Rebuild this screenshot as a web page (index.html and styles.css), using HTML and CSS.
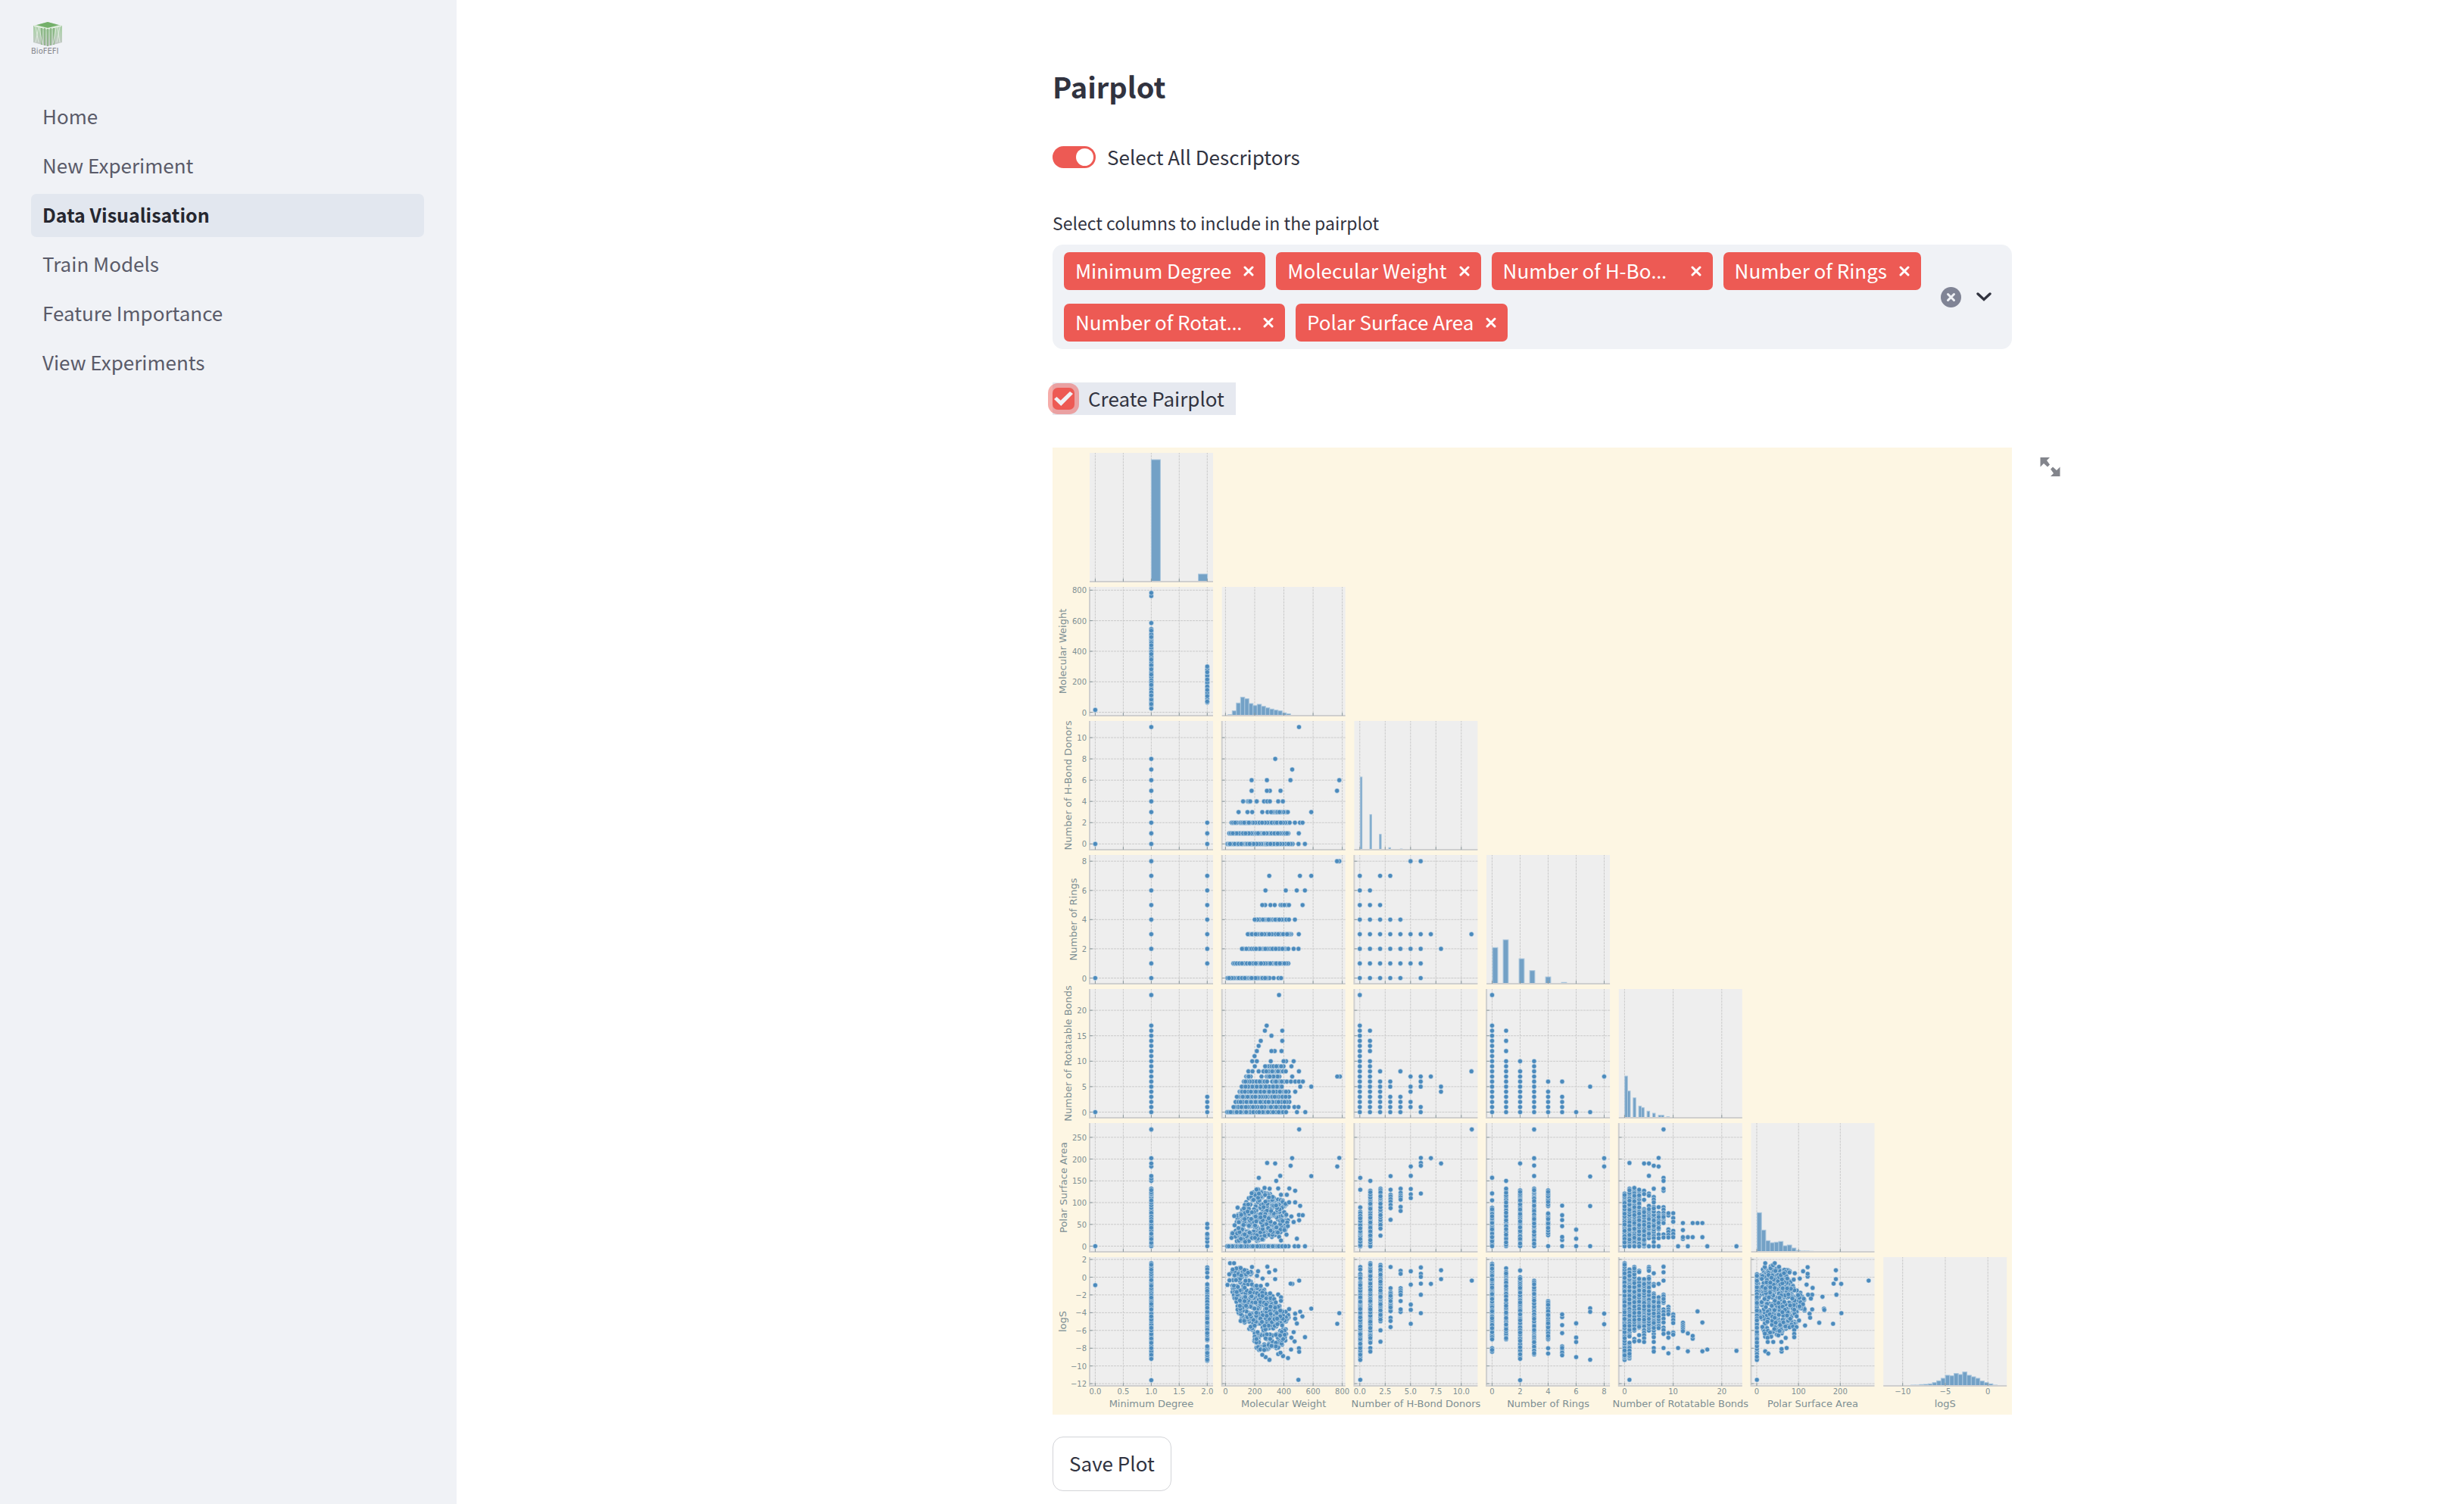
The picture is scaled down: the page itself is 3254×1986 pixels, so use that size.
FILE: index.html
```html
<!DOCTYPE html>
<html lang="en">
<head>
<meta charset="utf-8">
<title>Data Visualisation</title>
<link rel="stylesheet" href="styles.css">
</head>
<body>
<div class="app">
  <aside class="sidebar">
    <svg class="logo" viewBox="0 0 44 44" role="img" aria-label="BioFEFI">
      <defs>
        <linearGradient id="cube" x1="0" y1="0" x2="0" y2="1">
          <stop offset="0" stop-color="#5fa552"/>
          <stop offset=".45" stop-color="#82b67a"/>
          <stop offset="1" stop-color="#a5a3a6"/>
        </linearGradient>
      </defs>
      <path d="M3 6 22 1 41 6V28L22 33 3 28Z" fill="url(#cube)" opacity=".55"/>
      <path d="M8 5 22 1 36 5 22 9Z" fill="#5fa552" opacity=".7"/>
      <path d="M4 6 22 10 40 6" fill="none" stroke="#e3efe1" stroke-width="2"/>
      <path d="M22 10V33M18 9V32M26 9V32M14 9V31M30 9V31" stroke="#7fae78" stroke-width="2" opacity=".7"/>
      <path d="M6 8 10 28M10 8 6 28M11 9 15 30M35 8 38 28M38 8 34 28M33 9 29 30" fill="none" stroke="#e6efe6" stroke-width="1" opacity=".8"/>
      <text x="0" y="43" class="logo-text">BioFEFI</text>
    </svg>
    <nav class="nav">
      <a href="#home">Home</a>
      <a href="#new">New Experiment</a>
      <a href="#data" class="active" aria-current="page">Data Visualisation</a>
      <a href="#train">Train Models</a>
      <a href="#importance">Feature Importance</a>
      <a href="#view">View Experiments</a>
    </nav>
  </aside>
  <main class="main">
    <div class="content">
      <h1>Pairplot</h1>
      <label class="toggle"><input type="checkbox" role="switch" checked><span>Select All Descriptors</span></label>
      <div class="field">
        <p class="field-label" id="columns-label">Select columns to include in the pairplot</p>
        <div class="multiselect" role="group" aria-labelledby="columns-label">
          <ul class="chips">
            <li><span>Minimum Degree</span><button aria-label="Remove Minimum Degree"><svg viewBox="0 0 14 14"><path d="M2 2 12 12M12 2 2 12"/></svg></button></li>
            <li><span>Molecular Weight</span><button aria-label="Remove Molecular Weight"><svg viewBox="0 0 14 14"><path d="M2 2 12 12M12 2 2 12"/></svg></button></li>
            <li class="cut"><span>Number of H-Bo<i>…</i></span><button aria-label="Remove Number of H-Bond Donors"><svg viewBox="0 0 14 14"><path d="M2 2 12 12M12 2 2 12"/></svg></button></li>
            <li><span>Number of Rings</span><button aria-label="Remove Number of Rings"><svg viewBox="0 0 14 14"><path d="M2 2 12 12M12 2 2 12"/></svg></button></li>
            <li class="cut"><span>Number of Rotat<i>…</i></span><button aria-label="Remove Number of Rotatable Bonds"><svg viewBox="0 0 14 14"><path d="M2 2 12 12M12 2 2 12"/></svg></button></li>
            <li><span>Polar Surface Area</span><button aria-label="Remove Polar Surface Area"><svg viewBox="0 0 14 14"><path d="M2 2 12 12M12 2 2 12"/></svg></button></li>
          </ul>
          <button class="clear" aria-label="Clear all"><svg viewBox="0 0 27 27"><circle cx="13.5" cy="13.5" r="13.5" fill="#808495"/><path d="M9.5 9.5 17.5 17.5M17.5 9.5 9.5 17.5" stroke="#f0f2f6" stroke-width="3" stroke-linecap="round"/></svg></button>
          <button class="open" aria-label="Open"><svg viewBox="0 0 20 12"><path d="M2 2 10 9.500 18 2" fill="none" stroke="#31333f" stroke-width="3.400" stroke-linecap="round"/></svg></button>
        </div>
      </div>
      <label class="check"><input type="checkbox" checked><span>Create Pairplot</span></label>
      <div class="figure-row">
        <svg id="plot" class="plot" viewBox="0 0 1267 1277" role="img" aria-label="Pairplot of descriptors"></svg>
        <button class="expand" aria-label="View fullscreen"><svg viewBox="0 0 26 25"><path d="M0 0H12.500L8.500 4 12.500 9.500 9.500 12.500 4.500 8 0 12.500ZM26 25H13.500L17.500 21 13.500 15.500 16.500 12.500 21.500 17 26 12.500Z" fill="#83858c"/></svg></button>
      </div>
      <button class="save">Save Plot</button>
    </div>
  </main>
</div>
<script src="plot.js"></script>
</body>
</html>
```
FILE: styles.css
```css
* { box-sizing: border-box; }
body {
  margin: 0;
  background: #fff;
  color: #31333f;
  font-family: "Noto Sans CJK SC", "Noto Sans", sans-serif;
  font-size: 26px;
  line-height: 40px;
}
button { border: 0; padding: 0; background: none; font: inherit; color: inherit; }
svg { display: block; }
.app { display: flex; min-height: 100vh; }
.sidebar { flex: none; width: 603px; padding: 28px 43px 40px 41px; background: #f0f2f6; }
.logo { width: 44px; height: 44px; overflow: visible; }
.logo-text { font: 10px "DejaVu Sans", sans-serif; fill: #85868c; }
.nav { display: flex; flex-direction: column; gap: 8px; margin-top: 54px; }
.nav a { padding: 7px 15px 10px; border-radius: 7px; color: #5a5b69; text-decoration: none; }
.nav .active { background: #e2e7ef; color: #262730; font-size: 25px; font-weight: 700; }
.main { flex: 1; display: grid; grid-template-columns: 787fr 1267fr 597fr; }
.content { grid-column: 2; padding-top: 86px; min-width: 0; }
h1 { margin: 0; font-size: 38px; line-height: 56px; font-weight: 700; }
.toggle { display: flex; align-items: center; gap: 15px; height: 40px; margin-top: 45px; }
.toggle input {
  appearance: none; display: flex; justify-content: flex-end; margin: 0;
  width: 57px; height: 29px; padding: 3px; border-radius: 15px; background: #ed5a54;
}
.toggle input::before { content: ""; width: 23px; height: 23px; border-radius: 50%; background: #fff; }
.field-label { margin: 48px 0 10px; font-size: 23px; line-height: 38px; }
.multiselect {
  display: flex; align-items: center; padding: 10px 27px 10px 15px;
  border-radius: 14px; background: #f0f2f6;
}
.chips { flex: 1; display: flex; flex-wrap: wrap; gap: 18px 14px; margin: 0; padding: 0; list-style: none; }
.chips li {
  display: flex; align-items: center; justify-content: space-between; gap: 16px; height: 50px;
  padding: 0 15px; border-radius: 7px; background: #ed5a54; color: #fff; white-space: nowrap;
}
.chips span { padding-bottom: 2px; }
.chips .cut { width: 292px; }
.chips i { font-family: "Noto Sans", sans-serif; font-style: normal; }
.chips svg { width: 14px; height: 14px; stroke: #fff; stroke-width: 3; stroke-linecap: round; }
.clear svg { width: 27px; height: 27px; }
.open { margin-left: 20px; }
.open svg { width: 20px; height: 12px; }
.check {
  display: flex; align-items: center; gap: 18px; width: fit-content; height: 43px;
  margin-top: 44px; padding-right: 15px; background: #e6e9f0;
}
.check span { padding-bottom: 2px; }
.check input {
  appearance: none; display: grid; place-items: center; width: 29px; height: 29px; margin: 0;
  border-radius: 7px; background: #ed5a54; box-shadow: 0 0 0 6px rgba(237, 90, 84, .5);
}
.check input::before {
  content: ""; width: 25px; height: 19px; background: #f0f2f6;
  clip-path: polygon(0 53%, 14% 37%, 35% 62%, 84% 0, 100% 16%, 37% 100%);
}
.figure-row { display: flex; align-items: flex-start; margin-top: 43px; }
.plot { flex: none; width: 100%; background: #fdf6e3; }
.expand { flex: none; margin: 13px 0 0 37px; }
.expand svg { width: 27px; height: 25px; }
.save {
  height: 72px; margin: 29px 0 17px; padding: 0 21px 2px;
  border: 1px solid #d3d4d8; border-radius: 14px; background: #fff;
}
.plot text { font-family: "DejaVu Sans", sans-serif; fill: #7d8f93; }
.plot .tick { font-size: 10px; }
.plot .name { font-size: 13px; }
.plot .panel { fill: #eee; }
.plot .grid { stroke: #cbcbcb; stroke-dasharray: 3 1; fill: none; }
.plot .spine { stroke: #cfcfcf; stroke-width: 2; fill: none; }
.plot .mark { stroke: #8d9a9d; stroke-width: 1; fill: none; }
.plot .bar { fill: #73a1c6; stroke: #a9c6dd; stroke-width: 1; }
.plot circle { fill: #4b8abc; stroke: #d9e6f0; stroke-width: .6; }
```
FILE: plot.js
```js
// Lower-triangle pairplot: histograms on the diagonal, scatter panels below it.
const W = 163, H = 170;
const left = c => 49 + 174.7 * c, top_ = r => 7 + 177 * r;

// Each variable: name, tick values, decimals, x = x0 + kx*v, y = y0 - ky*v, label baseline.
const vars = [
  { name: 'Minimum Degree', ticks: [0, .5, 1, 1.5, 2], dec: 1, x0: 7.4, kx: 73.95 },
  { name: 'Molecular Weight', ticks: [0, 200, 400, 600, 800], x0: 4.7, kx: .19275, y0: 165.6, ky: .2016, base: 18 },
  { name: 'Number of H-Bond Donors', ticks: [0, 2.5, 5, 7.5, 10], yticks: [0, 2, 4, 6, 8, 10], dec: 1, x0: 7.4, kx: 13.4, y0: 162.4, ky: 14.04, base: 25 },
  { name: 'Number of Rings', ticks: [0, 2, 4, 6, 8], x0: 7.4, kx: 18.5, y0: 162.5, ky: 19.29, base: 32 },
  { name: 'Number of Rotatable Bonds', ticks: [0, 10, 20], yticks: [0, 5, 10, 15, 20], x0: 7.6, kx: 6.42, y0: 162.5, ky: 6.72, base: 25 },
  { name: 'Polar Surface Area', ticks: [0, 100, 200], yticks: [0, 50, 100, 150, 200, 250], x0: 7.5, kx: .5516, y0: 162.5, ky: .575, base: 19 },
  { name: 'logS', ticks: [-10, -5, 0], yticks: [2, 0, -2, -4, -6, -8, -10, -12], x0: 138, kx: 11.25, y0: 26.5, ky: 11.72, base: 18 }
];

// Histogram bars: [x, height] pairs in "at", or adjacent heights in "h" starting at "from".
const bars = [
  { w: 12, at: [[81.4, 161], [143.6, 10]] },
  { w: 5.5, from: 8.1, h: [1.3, 6.3, 16.7, 24.3, 22.3, 16, 13.3, 15, 12.3, 10.3, 8.7, 7.3, 6.3, 3.7, 2.3, .4, .4] },
  { w: 2.4, at: [[8, 96], [20.6, 46.3], [33.3, 20.3], [45.6, 2.7], [61, 1]] },
  { w: 6.8, at: [[8, 47.7], [22, 58], [43, 33], [57, 17.3], [78, 9], [99, 1.7]] },
  { w: 3.5, at: [[8, 55], [11.7, 35.3], [19, 26.3], [26.3, 15.3], [30, 13.3], [37.3, 8.7], [44.7, 6], [52.3, 3.3], [56, 3.3], [63.3, 1.3], [71.7, .5]] },
  { w: 5.7, from: 8, h: [51.7, 28.7, 14.7, 12, 12.7, 13.7, 8, 9, 5, 1.7, 1, 1, .7] },
  { w: 5.7, from: 36.3, h: [1, 1, 1.7, 2, 2.7, 4.3, 6.7, 10, 14, 13.3, 16.3, 15, 18.3, 14, 12, 10, 6.3, 4.3, 2.7, 1] }
];

const seq = (a, b) => Array.from({ length: b - a + 1 }, (_, i) => a + i);
const k = n => 46 + 19.27 * n;

// v: columns [x, [y or [from, to], ...]]; h: rows [y, [x or [from, to], ...]]; pts: x, y pairs;
// cloud: a point count, then its outline. An origin puts the values in thirds of a unit from it.
const panels = [
  { r: 1, c: 0, v: [[0, [16]], [1, [[25, 545], 585, 762, 782]], [2, [[65, 300]]]] },
  { r: 2, c: 0, v: [[0, [0]], [1, [...seq(0, 8), 11]], [2, [0, 1, 2]]] },
  { r: 3, c: 0, v: [[0, [0]], [1, seq(0, 8)], [2, seq(1, 7)]] },
  { r: 4, c: 0, v: [[0, [0]], [1, [...seq(0, 17), 23]], [2, seq(0, 3)]] },
  { r: 5, c: 0, v: [[0, [0]], [1, [[0, 132], 150, 155, 161, 183, 190, 202, 268]], [2, [0, 10, 18, 25, 28, 42, 51]]] },
  { r: 6, c: 0, v: [[0, [-.9]], [1, [[1.58, -9.2], -11.6]], [2, [1.1, .9, .5, 0, [-.8, -7.1], [-7.8, -9.4]]]] },
  { r: 2, c: 1, h: [[0, [[14, 460], 500, 544]], [1, [[26, 430], 502]], [2, [[42, 440], 476, 510, 528]],
    [3, [90, 151, 183, 252, 288, [312, 427], 588]], [4, [121, 153, 161, 169, 214, 264, 286, 304, 361, 393]],
    [5, [179, 304, 284, 377, 764]], [6, [179, 284, 445, 780]], [7, [457]], [8, [341]], [11, [504]]] },
  { r: 3, c: 1, h: [[8, [780, 764]], [7, [300, 510, 588]], [6, [274, 413, 488, 544]], [5, [272, 252, 308, 337, [377, 435], 528]],
    [4, [[200, 435], 476]], [3, [[153, 450], 502]], [2, [[113, 430], 467, 500]], [1, [[54, 430]]], [0, [[14, 302], 330, 363, 381]]] },
  { r: 3, c: 2, h: [[8, [5, 6]], [7, [0, 2, 3]], [6, [0, 1]], [5, [0, 1, 2]], [4, seq(0, 4)], [3, [...seq(0, 7), 11]],
    [2, [...seq(0, 6), 8]], [1, seq(0, 6)], [0, [...seq(0, 4), 6]]] },
  { r: 4, c: 1, h: [[23, [367]], [17, [282]], [16, [270, 389]], [15, [315]], [14, [242, 389]], [13, [227]], [12, [215, 337, 315, 384]],
    [11, [199]], [10, [183, 215, 310, 415, 398, 467]], [9, [201, [272, 398], 452]], [8, [157, 185, 227, [260, 372], 394, 413, 503]],
    [7, [[142, 173], 247, [282, 369], 457, 784, 766]], [6, [[126, 285], [320, 400], 420, 448, 478, 503, 530]],
    [5, [[111, 386], 512, 588]], [4, [[97, 432], 478]], [3, [[78, 436]]], [2, [[69, 438]]], [1, [[55, 432], 472, 500]], [0, [[12, 415], 490, 547]]] },
  { r: 4, c: 2, v: [[0, [...seq(0, 17), 23]], [1, [...seq(0, 10), 12, 13, 14, 16]], [2, [...seq(0, 6), 8]], [3, [0, 1, 2, 3, 5, 6]],
    [4, [0, 1, 2, 3, 8]], [5, [1, 2, 4, 5, 7]], [6, [0, 1, 5, 6, 7]], [7, [7]], [8, [4, 5]], [11, [8]]] },
  { r: 4, c: 3, v: [[0, [...seq(0, 17), 23]], [1, [...seq(0, 10), 12, 14, 16]], [2, [...seq(0, 8), 10]], [3, seq(0, 10)],
    [4, [0, 1, 2, 3, 4, 6]], [5, [0, 1, 2, 3, 6]], [6, [0]], [7, [0, 5]], [8, [7]]] },
  { r: 5, c: 1, origin: [11, 9], h: [[497, [[32, 275], 299, 314, 340]]],
    pts: [317,34,289,148,476,147,190,167,222,169,283,178,468,181,365,219,242,218,157,226,226,238,278,268,234,268,301,277,200,269,180,266,148,272,129,287,268,293,245,293,301,323,277,323,321,337,73,344,60,377,316,373,331,374,317,394,295,401,308,467,267,451,245,474,272,417,286,379],
    cloud: [390, 42,462,60,415,75,370,90,350,112,310,148,270,180,270,215,300,262,320,278,335,240,350,262,365,285,390,265,430,240,462,200,468,160,475,110,482,70,480] },
  { r: 5, c: 2, origin: [535, 9], v: [[559, [226, 273, 343, [360, 497]]], [599, [238, [277, 497]]], [639, [[269, 427], 455]],
    [679, [219, 273, 293, 300, 310, 320, 333, 346, 392]], [719, [269, 285, 296, 303, 312, 341, 357]], [759, [181, 218, 270, 291, 306]],
    [799, [147, 167, 178, 288]], [839, [148]], [879, [169]], [1001, [34]]] },
  { r: 5, c: 3, v: [[0, [157, 121, 105, [0, 88]]], [1, [150, [0, 132]]], [2, [190, [0, 128]]], [3, [268, 202, 185, 161, [0, 132]]],
    [4, [0, [25, 75], [92, 128]]], [5, [0, 14, 21, 46, 60, 71, 93]], [6, [0, 17, 38]], [7, [0, 92, 160]], [8, [183, 202]]] },
  { r: 5, c: 4, origin: [23, 9], v: [[k(0), [[288, 497]]], [k(1), [167, [269, 497]]], [k(2), [[266, 497]]], [k(3), [[273, 497]]],
    [k(4), [169, 277, 290, 313, [350, 497]]], [k(5), [169, 218, 288, 296, 337, [350, 465], 497]], [k(6), [178, 269, 302, 312, 323, [341, 465], 480, 497]],
    [k(7), [147, 181, 342, 365, [375, 430], 450, 465, 497]], [k(8), [34, 226, 238, 277, 269, 342, 352, 365, [375, 405], 450, 462]],
    [k(9), [375, 366, 430, 440, 452, 462]], [k(10), [366, 385, 400, 436, 448, 461]], [k(11), [497]], [k(12), [405, 433, 468, 461]],
    [k(13), [461, 497]], [k(14), [405, 461]], [k(15), [405]], [k(16), [405, 461]], [k(17), [497]], [k(23), [497]]] },
  { r: 6, c: 1, origin: [11, 541],
    pts: [43,565,59,565,130,580,191,579,222,593,198,601,154,597,150,615,172,626,222,628,317,634,40,609,41,633,290,647,283,646,33,651,165,655,190,650,234,689,245,700,245,714,365,745,476,763,468,805,330,776,321,757,301,765,301,785,308,804,277,747,295,838,340,858,299,875,286,860,285,907,316,902,317,916,273,941,253,933,199,948,184,937,314,1027,234,925,243,920,171,928],
    cloud: [490, 50,580,85,583,130,600,115,630,150,645,190,665,215,695,240,735,278,770,265,820,268,860,252,900,232,905,212,895,188,908,160,922,140,900,130,850,95,825,78,770,62,715,48,680,50,620] },
  { r: 6, c: 2, origin: [535, 541], v: [[559, [580, 590, [608, 625], [640, 948], 1027]], [599, [[565, 880], 901, 915]], [639, [[572, 795], 831, 876]],
    [679, [580, 664, [680, 755], 781, 794, 818]], [719, [595, 607, 664, 672, 680, 690, 715, 758, 748]], [759, [597, 650, 729, 750, 805]],
    [799, [582, 607, 619, 646, 690, 763]], [839, [647]], [879, [593, 628]], [1001, [634]]] },
  { r: 6, c: 3, v: [[0, [[1.5, -7], -8, -8.4, -8.2]], [1, [1, [.6, -7]]], [2, [.75, [0, -9.2], -11.6]], [3, [[-.4, -8.7]]], [4, [[-2.7, -7], -8, -8.6]],
    [5, [-4.5, -4.2, -5.4, -6.3, [-7.8, -8.8]]], [6, [-5.2, -6.8, -7.3, -9]], [7, [-3.5, -3.9, -9.3]], [8, [-4.1, -5.3]]] },
  { r: 6, c: 4, origin: [23, 541], v: [[k(0), [[565, 948]]], [k(1), [[590, 855], [880, 942], 1027]], [k(2), [[580, 832], 865, 875]],
    [k(3), [595, 600, [627, 820], 850, 873]], [k(4), [[628, 815], 830, 840, 850, 862, 877]], [k(5), [[580, 595], [620, 832]]],
    [k(6), [605, 648, 655, [685, 845], 858, 877, 901, 915]], [k(7), [647, 700, [715, 822]]], [k(8), [579, 601, 634, [690, 722], 748, 758, 770, 785, 800, 820, 830, 845, 901]],
    [k(9), [738, 748, 757, 767, 842, 860, 922]], [k(10), [768, 778, 790, 802, 840, 848]], [k(11), [901]], [k(12), [801, 810, 818, 826, 834]],
    [k(13), [843, 914]], [k(14), [864, 853]], [k(15), [756]], [k(16), [800, 914]], [k(17), [907]], [k(23), [912]]] },
  { r: 6, c: 5, origin: [547, 541], v: [[570, [[609, 948], 1027]]],
    pts: [603,565,641,565,771,581,753,597,771,618,771,607,720,605,740,626,716,630,883,593,883,628,1013,634,874,646,904,647,767,650,791,663,885,690,830,698,836,745,837,750,905,763,817,801,872,805,761,812,789,690,773,690,784,705,789,748,779,765,781,781,727,818,737,792,718,830,718,845,718,858,684,861,613,877,635,877,667,877,688,901,668,915,668,905,603,914,615,923],
    cloud: [430, 572,625,600,580,635,572,700,592,705,640,725,670,765,690,755,720,770,745,735,790,705,825,660,850,600,865,580,800,574,730] }
];

let seed = 7;
const rnd = () => (seed = (seed * 16807) % 2147483647) / 2147483647;

function shuffle(a) {
  for (let i = a.length - 1; i > 0; i--) {
    const j = Math.floor(rnd() * (i + 1));
    [a[i], a[j]] = [a[j], a[i]];
  }
  return a;
}

function inside(x, y, poly) {
  let hit = false;
  for (let i = 0, j = poly.length - 1; i < poly.length; j = i++) {
    const [xi, yi] = poly[i], [xj, yj] = poly[j];
    if ((yi > y) !== (yj > y) && x < (xj - xi) * (y - yi) / (yj - yi) + xi) hit = !hit;
  }
  return hit;
}

// Fills a stretch of an axis with closely set positions, drawn in mixed order.
function spread(item, map) {
  if (!Array.isArray(item)) return [map(item)];
  const a = map(item[0]), b = map(item[1]), lo = Math.min(a, b), hi = Math.max(a, b), out = [lo, hi];
  for (let p = lo + 2; p < hi - 1; p += 1.2 + rnd() * 2.6) out.push(p);
  return shuffle(out);
}

function points(p) {
  const vx = vars[p.c], vy = vars[p.r], o = p.origin;
  const mx = o ? v => (v - o[0]) / 3 : v => vx.x0 + vx.kx * v;
  const my = o ? v => (v - o[1]) / 3 : v => vy.y0 - vy.ky * v;
  const out = [];
  if (p.cloud) {
    const poly = [];
    for (let i = 1; i < p.cloud.length; i += 2) poly.push([mx(p.cloud[i]), my(p.cloud[i + 1])]);
    const xs = poly.map(q => q[0]), ys = poly.map(q => q[1]);
    const x0 = Math.min(...xs), x1 = Math.max(...xs), y0 = Math.min(...ys), y1 = Math.max(...ys);
    while (out.length < p.cloud[0]) {
      const x = x0 + rnd() * (x1 - x0), y = y0 + rnd() * (y1 - y0);
      if (inside(x, y, poly)) out.push([x, y]);
    }
  }
  for (const [x, list] of p.v || []) for (const item of list) for (const y of spread(item, my)) out.push([mx(x), y]);
  for (const [y, list] of p.h || []) for (const item of list) for (const x of spread(item, mx)) out.push([x, my(y)]);
  for (let i = 0; p.pts && i < p.pts.length; i += 2) out.push([mx(p.pts[i]), my(p.pts[i + 1])]);
  return out;
}

const fmt = (v, dec) => v.toFixed(dec || 0).replace('-', '\u2212');
let svg = '';

for (let r = 0; r < 7; r++) for (let c = 0; c <= r; c++) {
  const vx = vars[c], vy = vars[r], diag = r === c;
  svg += `<g transform="translate(${left(c)} ${top_(r)})"><rect class="panel" width="${W}" height="${H}"/>`;
  let grid = '', mark = '';
  for (const t of vx.ticks) {
    const x = (vx.x0 + vx.kx * t).toFixed(1);
    grid += `M${x} ${H}V0`;
    mark += `M${x} ${H}v-4`;
    if (r === 6) svg += `<text class="tick" text-anchor="middle" x="${x}" y="181">${fmt(t, vx.dec)}</text>`;
  }
  if (!diag) for (const t of vy.yticks || vy.ticks) {
    const y = vy.y0 - vy.ky * t;
    grid += `M0 ${y.toFixed(1)}H${W}`;
    mark += `M0 ${y.toFixed(1)}h4`;
    if (c === 0) svg += `<text class="tick" text-anchor="end" x="-4" y="${(y + 4).toFixed(1)}">${fmt(t)}</text>`;
  }
  svg += `<path class="grid" d="${grid}"/>`;
  if (diag) {
    const b = bars[r];
    const list = b.at || b.h.map((h, i) => [b.from + i * b.w, h]);
    for (const [x, h] of list) svg += `<rect class="bar" x="${x.toFixed(1)}" y="${H - h}" width="${b.w}" height="${h}"/>`;
  } else {
    const p = panels.find(q => q.r === r && q.c === c);
    for (const [x, y] of points(p)) svg += `<circle cx="${x.toFixed(1)}" cy="${y.toFixed(1)}" r="3.1"/>`;
  }
  svg += `<path class="spine" d="${diag ? `M0 ${H}H${W}` : `M0 0V${H}H${W}`}"/><path class="mark" d="${mark}"/></g>`;
}

vars.forEach((v, i) => {
  svg += `<text class="name" text-anchor="middle" x="${left(i) + W / 2}" y="1267">${v.name}</text>`;
  if (i) svg += `<text class="name" text-anchor="middle" transform="translate(${v.base} ${top_(i) + H / 2}) rotate(-90)">${v.name}</text>`;
});
document.getElementById('plot').innerHTML = svg;
```
